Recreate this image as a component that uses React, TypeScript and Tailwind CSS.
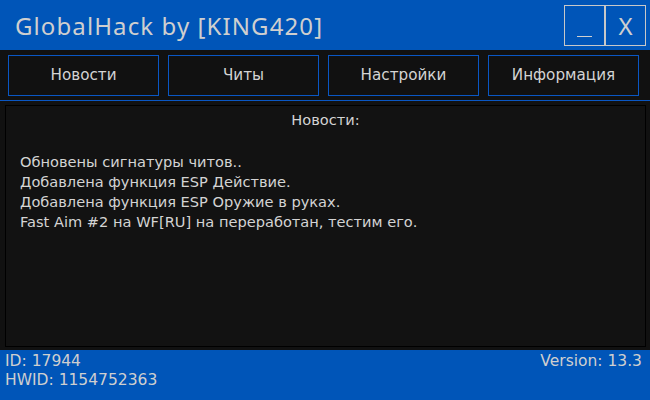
import React from "react";

const tabs = ["Новости", "Читы", "Настройки", "Информация"];
const news = [
  "Обновены сигнатуры читов..",
  "Добавлена функция ESP Действие.",
  "Добавлена функция ESP Оружие в руках.",
  "Fast Aim #2 на WF[RU] на переработан, тестим его.",
];

export default function App() {
  return (
    <div
      className="w-[650px] h-[400px] bg-[#111111] flex flex-col overflow-hidden text-[#d4d4d4]"
      style={{ fontFamily: '"DejaVu Sans", sans-serif' }}
    >
      <div className="h-[50px] bg-[#0055b8] flex items-start justify-between shrink-0">
        <div
          className="pl-[15px] pt-[11px] text-[24px] leading-[30px] tracking-[1.1px] text-[#cfcfcf]"
          style={{ fontFamily: '"Noto Sans", sans-serif' }}
        >
          GlobalHack by [KING420]
        </div>
        <div className="flex mt-[5px] mr-[4px]">
          <div className="w-[41px] h-[41px] border border-[#c8c8c8] flex items-end justify-center pb-[8px]">
            <div className="w-[15px] h-[1px] bg-[#d0d0d0]" />
          </div>
          <div
            className="w-[41px] h-[41px] border border-[#c8c8c8] flex items-center justify-center text-[24px] text-[#cfcfcf]"
            style={{ fontFamily: '"Noto Sans", sans-serif' }}
          >
            X
          </div>
        </div>
      </div>
      <div className="mt-[5px] pl-[8px] pr-[11px] grid grid-cols-4 gap-[9px] shrink-0">
        {tabs.map((t) => (
          <div
            key={t}
            className="h-[41px] border border-[#0a57c4] bg-[#111111] flex items-center justify-center text-[15.2px]"
          >
            {t}
          </div>
        ))}
      </div>
      <div className="mt-[4px] h-[1px] bg-[#0a57c4] shrink-0" />
      <div className="mt-[4px] ml-[5px] mr-[4px] h-[242px] border border-black bg-[#121212] shrink-0 flex flex-col">
        <div className="text-center text-[14.6px] leading-[20px] pt-[4px]">Новости:</div>
        <div className="pl-[14px] pt-[22px] text-[14.6px] leading-[20px]">
          {news.map((n) => (
            <div key={n}>{n}</div>
          ))}
        </div>
      </div>
      <div className="mt-[3px] flex-1 bg-[#0055b8] pl-[5px] pr-[8px] pt-[2px] text-[15.5px] leading-[19px] text-[#cfcfcf]">
        <div className="flex justify-between">
          <span>ID: 17944</span>
          <span>Version: 13.3</span>
        </div>
        <div>HWID: 1154752363</div>
      </div>
    </div>
  );
}
